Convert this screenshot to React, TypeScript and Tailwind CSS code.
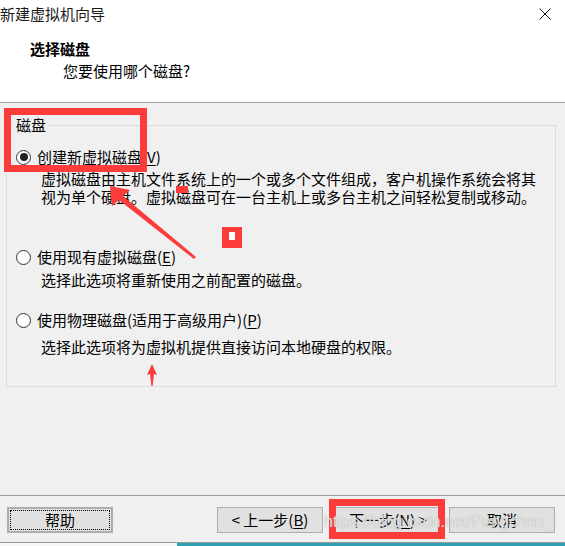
import React from "react";

function Radio({ checked }: { checked?: boolean }) {
  return (
    <span className="flex h-[15px] w-[15px] shrink-0 items-center justify-center rounded-full border border-[#333333] bg-white">
      {checked && <span className="h-[8px] w-[8px] rounded-full bg-[#222222]" />}
    </span>
  );
}

function Option({
  label,
  mnemonic,
  checked,
  className,
}: {
  label: string;
  mnemonic: string;
  checked?: boolean;
  className?: string;
}) {
  return (
    <div className={"flex h-[20px] items-center gap-[6px] " + (className ?? "")}>
      <Radio checked={checked} />
      <span className="whitespace-nowrap leading-[20px]">
        {label}(<span className="underline underline-offset-2">{mnemonic}</span>)
      </span>
    </div>
  );
}

function WizButton({
  children,
  className,
}: {
  children: React.ReactNode;
  className?: string;
}) {
  return (
    <button
      type="button"
      className={
        "flex h-[26px] w-[106px] items-center justify-center border border-[#adadad] bg-[#e1e1e1] leading-[20px] " +
        (className ?? "")
      }
    >
      {children}
    </button>
  );
}

export default function App() {
  return (
    <div className="relative flex h-[546px] w-[565px] flex-col overflow-hidden bg-[#f0f0f0] text-[15px] text-black font-['Noto_Sans_CJK_SC','Noto_Sans',sans-serif]">
      {/* title + header */}
      <div className="h-[103px] shrink-0 border-b border-[#a0a0a0] bg-white">
        <div className="flex h-[28px] items-center justify-between">
          <span className="leading-[28px] text-[#1a1a1a]">新建虚拟机向导</span>
          <svg width="12" height="12" viewBox="0 0 12 12" className="mr-[14px]">
            <path d="M0.5 0.5 L11.5 11.5 M11.5 0.5 L0.5 11.5" stroke="#111" strokeWidth="1" />
          </svg>
        </div>
        <div className="pl-[30px] pt-[11px] font-bold leading-[20px]">选择磁盘</div>
        <div className="pl-[63px] pt-[2px] leading-[20px]">您要使用哪个磁盘?</div>
      </div>

      {/* group box */}
      <fieldset className="mx-[6px] mt-[12px] w-[550px] border border-[#dcdcdc] pb-[30px]">
        <legend className="ml-[6px] px-[3px] leading-[20px]">磁盘</legend>

        <div className="pl-[9px]">
          <Option label="创建新虚拟磁盘" mnemonic="V" checked className="mt-[12px]" />
          <div className="mt-[3px] pl-[25px] leading-[18px] whitespace-nowrap">
            <div>虚拟磁盘由主机文件系统上的一个或多个文件组成，客户机操作系统会将其</div>
            <div>视为单个硬盘。虚拟磁盘可在一台主机上或多台主机之间轻松复制或移动。</div>
          </div>

          <Option label="使用现有虚拟磁盘" mnemonic="E" className="mt-[41px]" />
          <div className="mt-[4px] pl-[25px] leading-[18px] whitespace-nowrap">
            选择此选项将重新使用之前配置的磁盘。
          </div>

          <Option label="使用物理磁盘(适用于高级用户)" mnemonic="P" className="mt-[21px]" />
          <div className="mt-[8px] pl-[25px] leading-[18px] whitespace-nowrap">
            选择此选项将为虚拟机提供直接访问本地硬盘的权限。
          </div>
        </div>
      </fieldset>

      <div className="flex-1" />

      {/* buttons */}
      <div className="shrink-0 border-t border-[#a0a0a0]">
        <div className="flex pb-[9px] pl-[7px] pt-[11px]">
          <WizButton className="border-2 border-[#0078d7] outline-1 outline-dotted outline-black outline-offset-[-4px]">
            帮助
          </WizButton>
          <WizButton className="ml-[104px]">&lt; 上一步(<span className="underline underline-offset-2">B</span>)</WizButton>
          <WizButton className="ml-[12px]">下一步(<span className="underline underline-offset-2">N</span>) &gt;</WizButton>
          <WizButton className="ml-[8px]">取消</WizButton>
        </div>
        <div className="flex h-[4px] border-t border-[#9a9a9a]">
          <div className="w-[177px] bg-[#f7f7f7]" />
          <div className="flex-1 bg-[#2f9fb4]" />
        </div>
      </div>

      {/* red annotations */}
      <div className="absolute left-[4px] top-[108px] h-[64px] w-[143px] border-[7px] border-[#fc3b3b]" />
      <div className="absolute left-[176px] top-[186px] h-[7px] w-[12px] bg-[#fc3b3b]" />
      <div className="absolute left-[222px] top-[227px] h-[21px] w-[20px] border-x-[7px] border-b-[8px] border-t-[5px] border-[#fc3b3b] bg-white" />
      <svg className="absolute left-[100px] top-[180px]" width="100" height="85" viewBox="0 0 100 85">
        <polygon points="10,6 30,10 23,16 96,77 94,79 19,20 12,26" fill="#fc3b3b" />
      </svg>
      <svg className="absolute left-[146px] top-[362px]" width="12" height="26" viewBox="0 0 12 26">
        <polygon points="6,2 11,13 8,12 6.6,24 5.4,24 4,12 1,13" fill="#fc3b3b" />
      </svg>
      <div className="absolute left-[329px] top-[499px] h-[40px] w-[116px] border-[7px] border-[#fc3b3b]" />

      {/* watermark */}
      <div className="absolute left-[324px] top-[511px] whitespace-nowrap text-[16px] leading-[22px] text-white/70 font-['Liberation_Sans',sans-serif] [text-shadow:0_0_1px_#9a9a9a]">
        https://blog.csdn.net/Pengchen_
      </div>
    </div>
  );
}
